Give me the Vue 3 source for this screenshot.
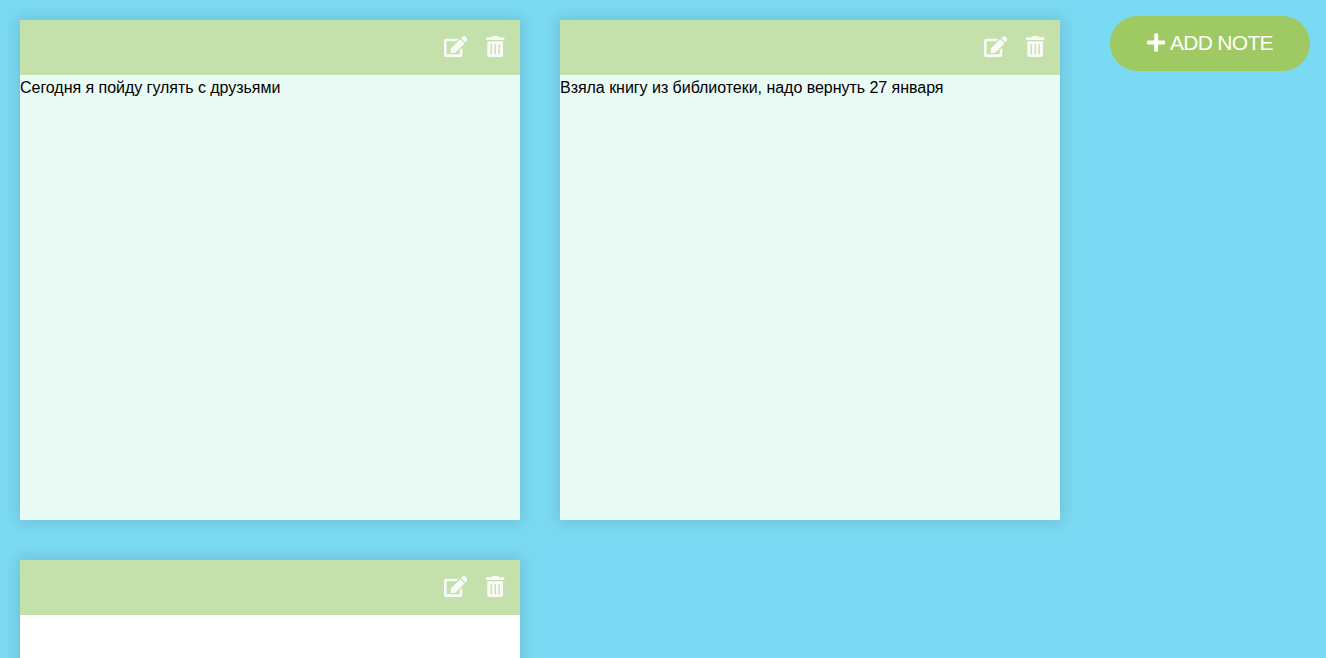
<script setup>
const notes = [
  { text: 'Сегодня я пойду гулять с друзьями', editing: false },
  { text: 'Взяла книгу из библиотеки, надо вернуть 27 января', editing: false },
  { text: '', editing: true },
]
</script>

<template>
  <div class="page">
    <section v-for="(note, i) in notes" :key="i" class="note" :class="{ editing: note.editing }">
      <div class="tools">
        <button class="edit" aria-label="edit">
          <svg viewBox="0 0 576 512"><path d="M402.6 83.2l90.2 90.2c3.8 3.8 3.8 10 0 13.8L274.400 405.600l-92.800 10.300c-12.400 1.400-22.900-9.100-21.500-21.500l10.300-92.800L388.800 83.200c3.800-3.800 10-3.800 13.800 0zm162-22.900l-48.800-48.800c-15.200-15.200-39.900-15.200-55.200 0l-35.400 35.400c-3.800 3.800-3.800 10 0 13.800l90.200 90.200c3.800 3.800 10 3.800 13.800 0l35.400-35.400c15.200-15.300 15.200-40 0-55.200zM384 346.200V448H64V128h229.800c3.200 0 6.200-1.300 8.500-3.500l40-40c7.600-7.600 2.200-20.500-8.500-20.500H48C21.500 64 0 85.500 0 112v352c0 26.500 21.500 48 48 48h352c26.500 0 48-21.500 48-48V306.200c0-10.700-12.900-16-20.500-8.500l-40 40c-2.200 2.300-3.500 5.300-3.500 8.500z" /></svg>
        </button>
        <button class="delete" aria-label="delete">
          <svg viewBox="0 0 448 512"><path d="M32 464a48 48 0 0 0 48 48h288a48 48 0 0 0 48-48V128H32zm272-256a16 16 0 0 1 32 0v224a16 16 0 0 1-32 0zm-96 0a16 16 0 0 1 32 0v224a16 16 0 0 1-32 0zm-96 0a16 16 0 0 1 32 0v224a16 16 0 0 1-32 0zM432 32H312l-9.400-18.700A24 24 0 0 0 281.100 0H166.800a23.720 23.720 0 0 0-21.400 13.300L136 32H16A16 16 0 0 0 0 48v32a16 16 0 0 0 16 16h416a16 16 0 0 0 16-16V48a16 16 0 0 0-16-16z" /></svg>
        </button>
      </div>
      <div class="main">{{ note.text }}</div>
    </section>
    <button class="add">
      <svg viewBox="0 0 448 512"><path d="M416 208H272V64c0-17.670-14.330-32-32-32h-32c-17.670 0-32 14.330-32 32v144H32c-17.670 0-32 14.330-32 32v32c0 17.670 14.330 32 32 32h144v144c0 17.670 14.330 32 32 32h32c17.670 0 32-14.330 32-32V304h144c17.670 0 32-14.330 32-32v-32c0-17.670-14.330-32-32-32z" /></svg>
      <span>ADD NOTE</span>
    </button>
  </div>
</template>

<style>
body {
  margin: 0;
  background: #7bdaf3;
  overflow: hidden;
}
</style>

<style scoped>
.page {
  display: flex;
  flex-wrap: wrap;
  align-content: flex-start;
  height: 658px;
  overflow: hidden;
  font-family: "Liberation Sans", Arial, sans-serif;
}
.note {
  width: 500px;
  height: 500px;
  margin: 20px;
  display: flex;
  flex-direction: column;
  background: #eafaf5;
  box-shadow: 0 0 15px 4px rgba(0, 0, 0, 0.1);
}
.note.editing {
  background: #fff;
}
.tools {
  height: 55px;
  flex: none;
  box-sizing: border-box;
  padding: 0 15.5px 2px 0;
  display: flex;
  align-items: center;
  justify-content: flex-end;
  gap: 19px;
  background: #c5e1ab;
}
.tools button {
  display: flex;
  padding: 0;
  border: 0;
  background: none;
  color: #fff;
  opacity: 0.9;
}
svg {
  display: block;
  fill: currentColor;
}
.edit svg {
  width: 23.6px;
  height: 21px;
}
.delete svg {
  width: 18.4px;
  height: 21px;
}
.main {
  padding-top: 3px;
  font-size: 16px;
  line-height: 20px;
  letter-spacing: -0.035px;
  color: #000;
}
.add {
  position: fixed;
  top: 16px;
  right: 16px;
  width: 200px;
  height: 55px;
  padding: 0 0 2px;
  display: flex;
  align-items: center;
  justify-content: center;
  gap: 4.5px;
  border: 0;
  border-radius: 28px;
  background: #9fc963;
  color: #fff;
  font: 21px "Liberation Sans", Arial, sans-serif;
  letter-spacing: -0.7px;
}
.add svg {
  width: 18.4px;
  height: 21px;
}
</style>
